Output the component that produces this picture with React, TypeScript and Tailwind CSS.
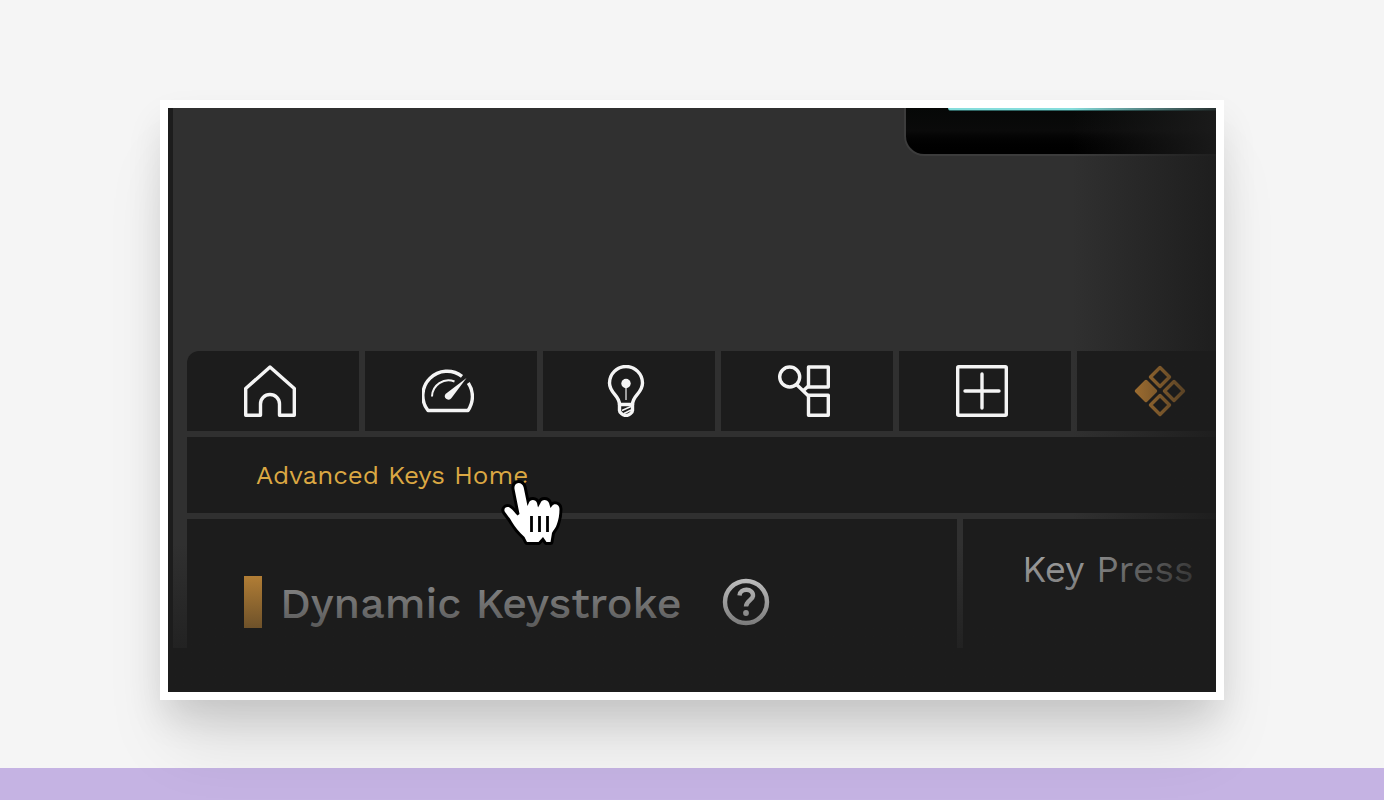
import { useState } from "react";
import type { ReactNode } from "react";

function HomeIcon() {
  return (
    <svg viewBox="0 0 52 52" className="h-[52px] w-[52px]" fill="none" stroke="currentColor" strokeWidth="3.400" strokeLinejoin="round">
      <path d="M26 2 50.300 23.500V50.300H35.500V39a9.500 9.500 0 0 0-19 0V50.300H1.700V23.500Z" />
    </svg>
  );
}

function GaugeIcon() {
  return (
    <svg viewBox="0 0 52 52" className="h-[52px] w-[52px]" fill="none" stroke="currentColor" strokeWidth="3.400" strokeLinejoin="round">
      <path d="M40 11.300A24.300 24.300 0 0 0 6 45.500H46A24.300 24.300 0 0 0 46.300 18" />
      <path d="M10 31.500A16.500 16.500 0 0 1 32.500 16.500" strokeWidth="2" />
      <path d="M44.500 13 29.500 33a3.400 3.400 0 0 1-6-4Z" fill="currentColor" stroke="none" />
    </svg>
  );
}

function BulbIcon() {
  return (
    <svg viewBox="0 0 52 52" className="h-[52px] w-[52px]" fill="none" stroke="currentColor" strokeWidth="3.400" strokeLinejoin="round">
      <path d="M19.500 39.500C19.500 30 9.500 28.500 9.500 18a16.500 16.500 0 0 1 33 0C42.500 28.500 32.500 30 32.500 39.500Z" />
      <path d="M19.500 39v6.500c0 2 3.500 5 6.500 5s6.500-3 6.500-5V39" />
      <path d="M22 45.500 31 41.500M24 48.500 31 45" strokeWidth="1.500" />
      <circle cx="26" cy="18.500" r="4.700" fill="currentColor" stroke="none" />
      <path d="M26 20V35" strokeWidth="2" strokeOpacity="0.6" />
    </svg>
  );
}

function MacroIcon() {
  return (
    <svg viewBox="0 0 52 52" className="h-[52px] w-[52px]" fill="none" stroke="currentColor" strokeWidth="3.400" strokeLinejoin="round">
      <circle cx="11.700" cy="12" r="10" />
      <rect x="30.500" y="2" width="19.800" height="20" />
      <rect x="30.500" y="30.300" width="19.800" height="20" />
      <path d="M18 19 30.500 31M25 26 30.500 21" />
    </svg>
  );
}

function PlusIcon() {
  return (
    <svg viewBox="0 0 52 52" className="h-[52px] w-[52px]" fill="none" stroke="currentColor" strokeWidth="3.400" strokeLinejoin="round">
      <rect x="1.700" y="1.700" width="48.600" height="48.600" rx="1" />
      <path d="M26 9V43M9 26H43" strokeLinecap="round" />
    </svg>
  );
}

function KeysIcon() {
  return (
    <svg viewBox="0 0 52 52" className="h-[52px] w-[52px]" fill="none" stroke="currentColor" strokeWidth="3.400" strokeLinejoin="round">
      <path d="M26 2.500 35.500 12 26 21.500 16.500 12Z" />
      <path d="M40 16.500 49.500 26 40 35.500 30.500 26Z" />
      <path d="M26 30.500 35.500 40 26 49.500 16.500 40Z" />
      <path d="M12 16.500 21.500 26 12 35.500 2.500 26Z" fill="currentColor" />
    </svg>
  );
}

function HelpIcon() {
  return (
    <svg viewBox="0 0 48 48" className="h-12 w-12" fill="none" stroke="currentColor" strokeWidth="4.400">
      <circle cx="24" cy="24" r="21" />
      <path d="M17.500 17.500c.5-8 14-7.500 13.500.5-.3 4-7 5-7 10.500" />
      <circle cx="24" cy="35" r="2.900" fill="currentColor" stroke="none" />
    </svg>
  );
}

function HandCursor() {
  return (
    <svg viewBox="0 0 64 68" className="h-[68px] w-16">
      <path
        d="M18.500 4C21 4 23 5.500 23.700 8.500L27.500 27L29 23.500C30 20 36 20 37 24L38 28.500L40.500 24C41.500 20 47.500 20 49 24L50.500 29L52 27C54 24 59.500 25 59.500 30C59.500 36 58.500 41 57 45C56 49 53 51 52 54L50.500 63H46.500L43 58L38.500 63H27L24.500 58C19 53 15 48 12 43C10 39 7 36 5 33C3 30 6 27 9.500 28.500C13 30.500 15 34 17.500 36.500L19.500 35L14.500 10C14 7 15.500 4 18.500 4Z"
        fill="#fff"
        stroke="#000"
        strokeWidth="6"
        strokeLinejoin="round"
        paintOrder="stroke"
      />
      <path d="M31.500 37V53M39.500 37V53M47.500 37V53" stroke="#000" strokeWidth="2.800" />
    </svg>
  );
}

const tabs: { label: string; icon: ReactNode }[] = [
  { label: "Home", icon: <HomeIcon /> },
  { label: "Performance", icon: <GaugeIcon /> },
  { label: "Lighting", icon: <BulbIcon /> },
  { label: "Macros", icon: <MacroIcon /> },
  { label: "Add", icon: <PlusIcon /> },
  { label: "Advanced Keys", icon: <KeysIcon /> },
];

function Tabs() {
  const [active, setActive] = useState("Advanced Keys");

  return (
    <nav className="flex gap-1.5 overflow-hidden rounded-tl-xl">
      {tabs.map((tab) => (
        <button
          key={tab.label}
          aria-label={tab.label}
          onClick={() => setActive(tab.label)}
          className={`flex h-20 min-w-[172px] shrink-0 items-center justify-center bg-[#1c1c1c] pr-1.5 ${
            active === tab.label ? "text-[#ee9f3c]" : "text-[#f4f4f4]"
          }`}
        >
          {tab.icon}
        </button>
      ))}
    </nav>
  );
}

function App() {
  return (
    <div className="flex min-h-screen flex-col bg-[#f5f5f5] font-['Work_Sans',Inter,sans-serif]">
      <main className="relative z-10 grow px-40 pt-[100px] pb-[68px]">
        <section className="relative overflow-hidden border-8 border-white bg-[#1c1c1c] pb-11 pl-[5px] shadow-[0_20px_36px_-4px_rgba(0,0,0,0.12),0_52px_64px_-12px_rgba(0,0,0,0.1)]">
          <div className="bg-[#303030] pl-3.5">
            <div className="flex h-[243px] items-start justify-end">
              <div className="h-12 w-[312px] rounded-bl-[20px] border-b-2 border-l-2 border-[#3c3c3c] bg-linear-to-b from-[#060807] via-[#0a0a0a] to-black pl-[42px]">
                <div className="h-[3px] rounded-bl-sm border-b border-[#2f6664] bg-[#86dddc]" />
              </div>
            </div>
            <Tabs />
            <div className="mt-1.5 flex h-[76px] items-center bg-[#1c1c1c] pl-[69px]">
              <a href="#" className="relative text-[26px] leading-8 text-[#dba843]">
                Advanced Keys Home
                <span className="absolute top-5 -right-9">
                  <HandCursor />
                </span>
              </a>
            </div>
            <div className="mt-1.5 flex gap-1.5">
              <div className="flex h-[129px] w-[770px] items-center bg-[#1c1c1c] pt-9 pl-[57px]">
                <span className="h-[52px] w-[18px] bg-[#da983c]" />
                <h1 className="ml-[18px] pt-0.5 text-[43px] leading-[52px] font-medium text-[#aaaaaa]">Dynamic Keystroke</h1>
                <button aria-label="Help" className="ml-10 text-[#eeeeee]">
                  <HelpIcon />
                </button>
              </div>
              <div className="grow bg-[#1c1c1c] pt-7 pl-[59px]">
                <h2 className="text-[37px] leading-[46px] whitespace-nowrap text-[#aaaaaa]">Key Press</h2>
              </div>
            </div>
          </div>
          <div className="pointer-events-none absolute inset-y-0 right-0 w-36 bg-linear-to-r from-[#1c1c1c]/0 to-[#1c1c1c]/90" />
          <div className="pointer-events-none absolute inset-x-0 bottom-0 h-[148px] bg-linear-to-b from-[#1c1c1c]/0 to-[#1c1c1c]" />
        </section>
      </main>
      <div className="h-8 bg-[#c5b3e3]" />
    </div>
  );
}

export default App;
